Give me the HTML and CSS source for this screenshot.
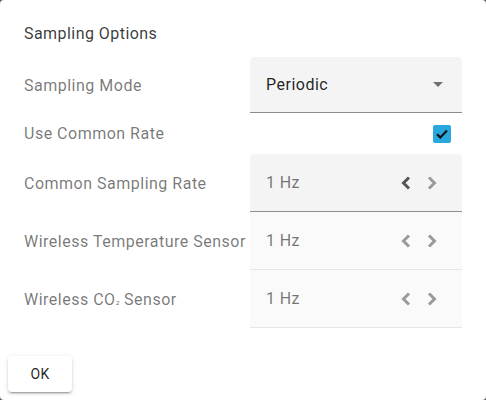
FILE: index.html
```html
<!DOCTYPE html>
<html>
<head>
<meta charset="utf-8">
<link rel="stylesheet" href="styles.css">
</head>
<body>
<div class="dialog">
  <div class="content">
    <div class="title">Sampling Options</div>
    <div class="form">
      <div class="label"><span>Sampling Mode</span></div>
      <div class="field select">
        <span class="value dark">Periodic</span>
        <svg class="caret" width="10" height="5" viewBox="0 0 10 5"><path d="M0 0 L5 5 L10 0 Z" fill="rgba(0,0,0,0.54)"/></svg>
      </div>

      <div class="label"><span>Use Common Rate</span></div>
      <div class="checkcell">
        <span class="checkbox">
          <svg width="18" height="18" viewBox="0 0 18 18"><path d="M4 9.2 L7.3 12.4 L14 5.6" fill="none" stroke="#111" stroke-width="2.2"/></svg>
        </span>
      </div>

      <div class="label"><span>Common Sampling Rate</span></div>
      <div class="field rate active">
        <span class="value">1 Hz</span>
        <span class="arrows">
          <svg width="10" height="14" viewBox="0 0 10 14"><path d="M8 1.5 L2.5 7 L8 12.5" fill="none" stroke="#555" stroke-width="3"/></svg>
          <svg width="10" height="14" viewBox="0 0 10 14"><path d="M2 1.5 L7.5 7 L2 12.5" fill="none" stroke="#9a9a9a" stroke-width="3"/></svg>
        </span>
      </div>

      <div class="label"><span>Wireless Temperature Sensor</span></div>
      <div class="field rate">
        <span class="value">1 Hz</span>
        <span class="arrows">
          <svg width="10" height="14" viewBox="0 0 10 14"><path d="M8 1.5 L2.5 7 L8 12.5" fill="none" stroke="#9a9a9a" stroke-width="3"/></svg>
          <svg width="10" height="14" viewBox="0 0 10 14"><path d="M2 1.5 L7.5 7 L2 12.5" fill="none" stroke="#9a9a9a" stroke-width="3"/></svg>
        </span>
      </div>

      <div class="label"><span>Wireless CO<span class="sub">₂</span> Sensor</span></div>
      <div class="field rate">
        <span class="value">1 Hz</span>
        <span class="arrows">
          <svg width="10" height="14" viewBox="0 0 10 14"><path d="M8 1.5 L2.5 7 L8 12.5" fill="none" stroke="#9a9a9a" stroke-width="3"/></svg>
          <svg width="10" height="14" viewBox="0 0 10 14"><path d="M2 1.5 L7.5 7 L2 12.5" fill="none" stroke="#9a9a9a" stroke-width="3"/></svg>
        </span>
      </div>
    </div>
  </div>
  <div class="actions">
    <button class="btn">OK</button>
  </div>
</div>
</body>
</html>
```
FILE: styles.css
```css
html, body {
  margin: 0;
  padding: 0;
  background: #5a5a5a;
}
body {
  width: 486px;
  height: 400px;
  overflow: hidden;
  font-family: Roboto, "Liberation Sans", sans-serif;
}
.dialog {
  width: 486px;
  height: 400px;
  background: #fff;
  border-radius: 4px;
  display: flex;
  flex-direction: column;
  justify-content: space-between;
  box-sizing: border-box;
}
.content {
  padding: 24px 24px 0 24px;
}
.title {
  font-size: 16px;
  line-height: 20px;
  color: rgba(0, 0, 0, 0.78);
  letter-spacing: 0.45px;
}
.form {
  margin-top: 13px;
  display: grid;
  grid-template-columns: 226px 212px;
}
.label {
  font-size: 16px;
  color: rgba(0, 0, 0, 0.54);
  letter-spacing: 0.5px;
  display: flex;
  align-items: center;
  white-space: nowrap;
}
.sub {
  font-family: "DejaVu Sans", sans-serif;
  font-size: 10px;
  letter-spacing: 0;
}
.field {
  display: flex;
  align-items: center;
  justify-content: space-between;
  padding: 0 14px 0 16px;
  box-sizing: border-box;
  font-size: 16px;
}
.select {
  height: 56px;
  background: #f4f4f4;
  border-radius: 4px 4px 0 0;
  border-bottom: 1px solid #8c8c8c;
}
.value {
  color: rgba(0, 0, 0, 0.54);
  letter-spacing: 0.4px;
}
.value.dark {
  color: rgba(0, 0, 0, 0.87);
  letter-spacing: 0.5px;
}
.caret {
  margin-right: 5px;
}
.checkcell {
  height: 41px;
  display: flex;
  align-items: center;
  justify-content: flex-end;
  padding-right: 11px;
}
.checkbox {
  width: 18px;
  height: 18px;
  background: #29a8e0;
  border-radius: 2px;
  display: block;
}
.checkbox svg {
  display: block;
}
.rate {
  height: 58px;
  background: #fafafa;
  border-bottom: 1px solid #e6e6e6;
}
.rate.active {
  background: #f4f4f4;
  border-radius: 4px 4px 0 0;
  border-bottom: 1px solid #8c8c8c;
}
.arrows {
  display: flex;
  gap: 16px;
  align-items: center;
  margin-right: 11px;
}
.arrows svg {
  display: block;
}
.actions {
  padding: 8px;
  display: flex;
}
.btn {
  width: 64px;
  height: 36px;
  border: none;
  background: #fff;
  border-radius: 4px;
  box-shadow: 0 3px 1px -2px rgba(0,0,0,0.2), 0 2px 2px 0 rgba(0,0,0,0.14), 0 1px 5px 0 rgba(0,0,0,0.12);
  font-family: Roboto, "Liberation Sans", sans-serif;
  font-size: 14px;
  color: rgba(0, 0, 0, 0.87);
  letter-spacing: 0.4px;
  padding: 0;
}
```
